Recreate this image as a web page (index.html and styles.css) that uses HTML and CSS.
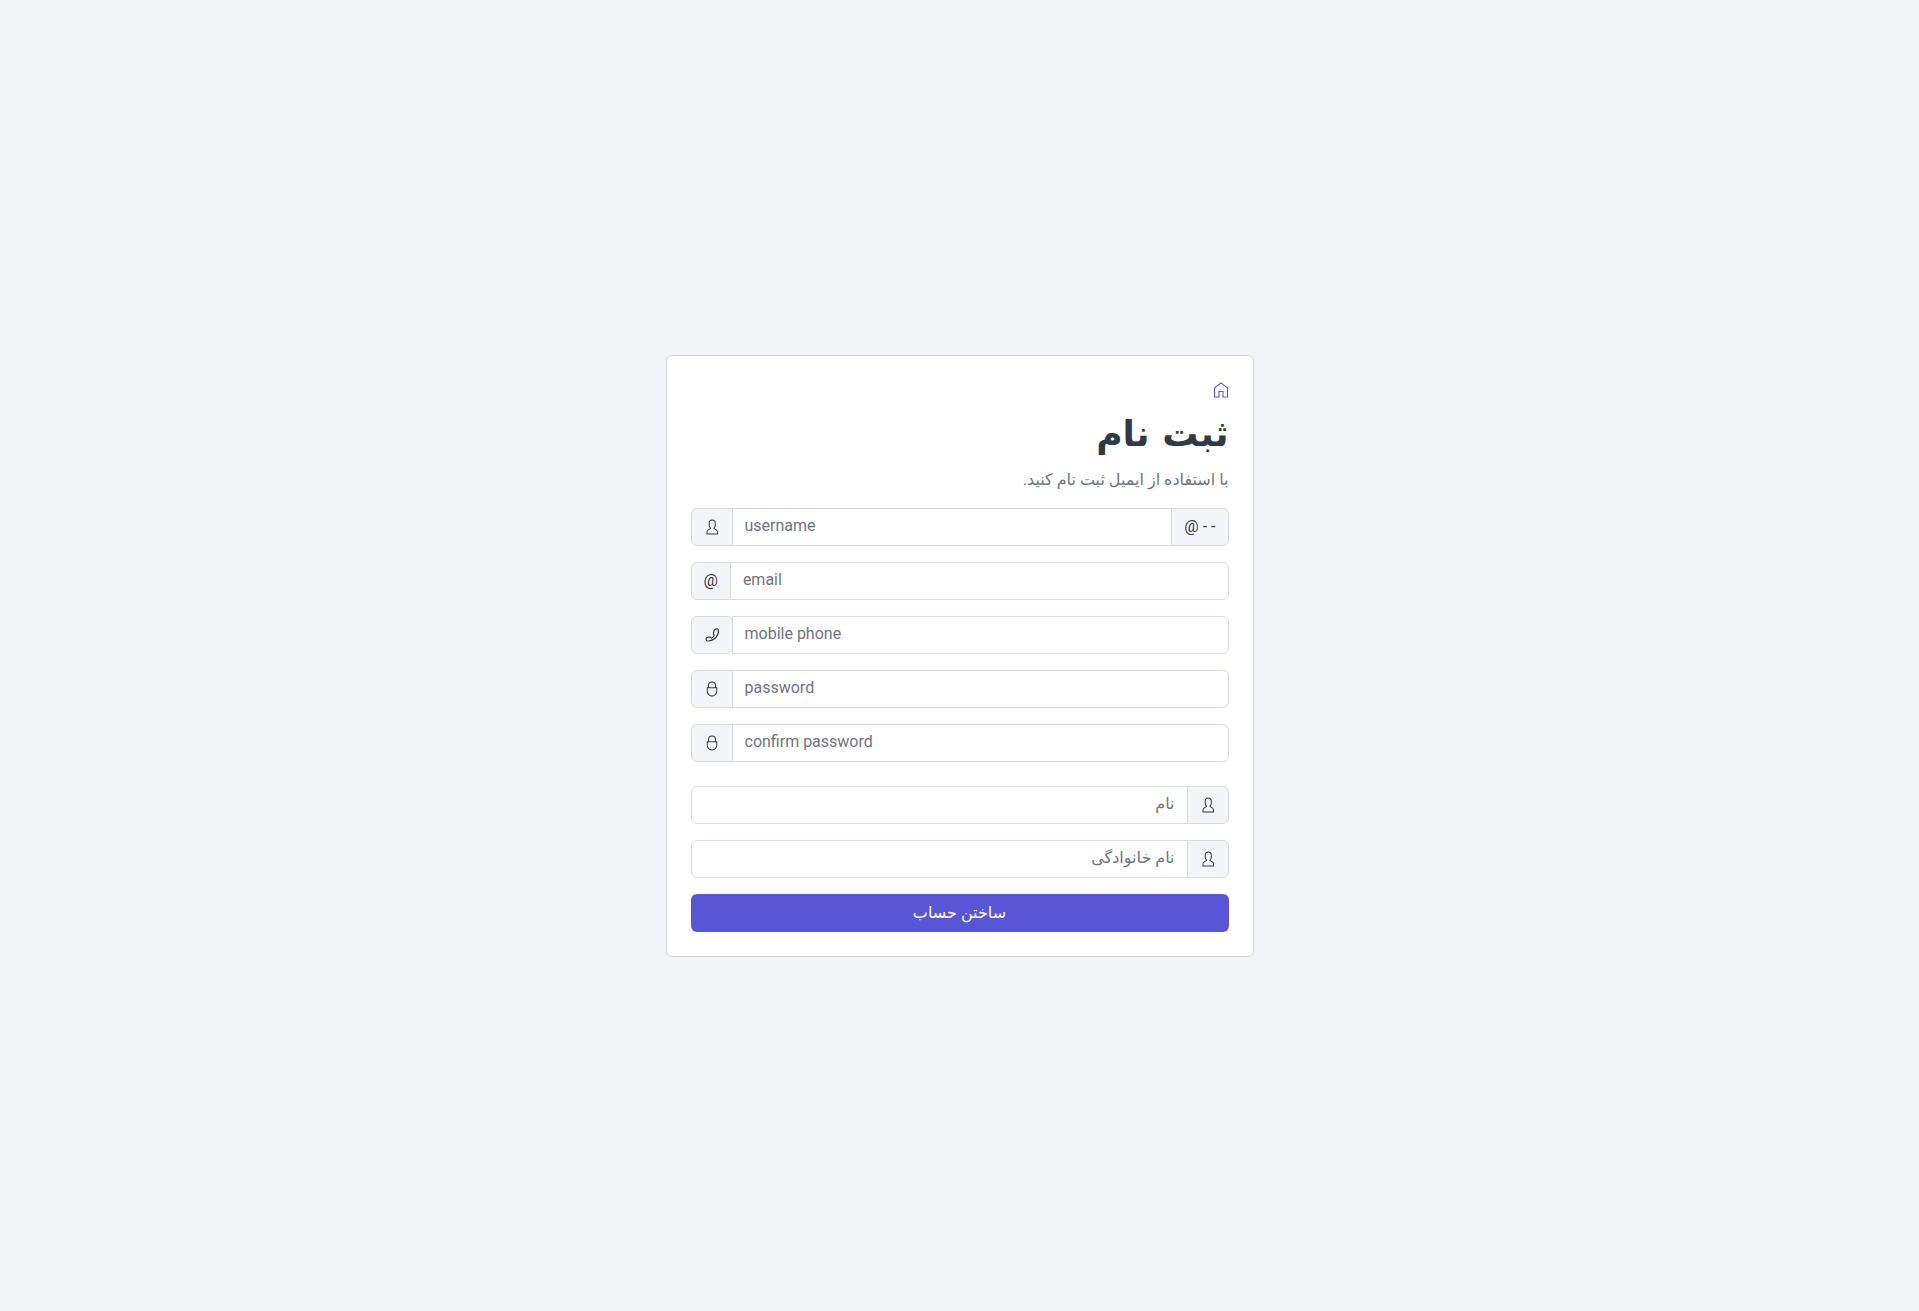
FILE: index.html
```html
<!DOCTYPE html>
<html lang="fa" dir="rtl">
<head>
<meta charset="utf-8">
<meta name="viewport" content="width=device-width, initial-scale=1">
<title>ثبت نام</title>
<link rel="stylesheet" href="styles.css">
</head>
<body>
<svg class="sprite" aria-hidden="true">
  <symbol id="user" viewBox="0 0 512 512"><path d="M411.6,343.656l-72.823-47.334,27.455-50.334A80.23,80.23,0,0,0,376,207.681V128a112,112,0,0,0-224,0v79.681a80.236,80.236,0,0,0,9.768,38.308l27.455,50.333L116.4,343.656A79.725,79.725,0,0,0,80,410.732V496H448V410.732A79.727,79.727,0,0,0,411.6,343.656ZM416,464H112V410.732a47.836,47.836,0,0,1,21.841-40.246l97.66-63.479-41.64-76.341A48.146,48.146,0,0,1,184,207.681V128a80,80,0,0,1,160,0v79.681a48.146,48.146,0,0,1-5.861,22.985L296.5,307.007l97.662,63.479h0A47.836,47.836,0,0,1,416,410.732Z"/></symbol>
  <symbol id="lock" viewBox="0 0 512 512"><path d="M384,200V144a128,128,0,0,0-256,0v56H88V328c0,92.635,75.364,168,168,168s168-75.365,168-168V200ZM160,144a96,96,0,0,1,192,0v56H160ZM392,328c0,74.99-61.01,136-136,136s-136-61.01-136-136V232H392Z"/></symbol>
  <symbol id="phone" viewBox="0 0 512 512"><path fill="none" stroke="currentColor" stroke-width="36" stroke-linejoin="round" d="M340 90L400 60Q440 46 456 85Q485 210 395 320Q285 440 125 446Q74 446 64 405L72 365Q78 338 106 332L180 318Q204 316 218 338L240 364Q306 324 334 258L306 232Q292 216 300 194L320 112Q326 96 340 90Z"/></symbol>
  <symbol id="home" viewBox="0 0 512 512"><path fill="none" stroke="currentColor" stroke-width="34" d="M48 480V194L256 28L464 194V480H320V304H192V480Z"/></symbol>
</svg>
<main class="page">
  <form class="card">
    <a class="home" href="#" aria-label="خانه"><svg class="icon"><use href="#home"/></svg></a>
    <h1 class="title">ثبت نام</h1>
    <p class="lead">با استفاده از ایمیل ثبت نام کنید.</p>
    <div class="group" dir="ltr">
      <label class="addon" for="username"><svg class="icon"><use href="#user"/></svg></label>
      <input class="field" id="username" type="text" placeholder="username" aria-label="username">
      <span class="addon">@ - -</span>
    </div>
    <div class="group" dir="ltr">
      <label class="addon" for="email">@</label>
      <input class="field" id="email" type="email" placeholder="email" aria-label="email">
    </div>
    <div class="group" dir="ltr">
      <label class="addon addon-rounded" for="mobile"><svg class="icon"><use href="#phone"/></svg></label>
      <input class="field" id="mobile" type="tel" placeholder="mobile phone" aria-label="mobile phone">
    </div>
    <div class="group" dir="ltr">
      <label class="addon" for="password"><svg class="icon"><use href="#lock"/></svg></label>
      <input class="field" id="password" type="password" placeholder="password" aria-label="password">
    </div>
    <div class="group group-last" dir="ltr">
      <label class="addon" for="confirm"><svg class="icon"><use href="#lock"/></svg></label>
      <input class="field" id="confirm" type="password" placeholder="confirm password" aria-label="confirm password">
    </div>
    <div class="group">
      <label class="addon" for="first"><svg class="icon"><use href="#user"/></svg></label>
      <input class="field" id="first" type="text" placeholder="نام" aria-label="نام">
    </div>
    <div class="group">
      <label class="addon" for="last"><svg class="icon"><use href="#user"/></svg></label>
      <input class="field" id="last" type="text" placeholder="نام خانوادگی" aria-label="نام خانوادگی">
    </div>
    <button class="submit" type="submit">ساختن حساب</button>
  </form>
</main>
</body>
</html>
```
FILE: styles.css
```css
*, *::before, *::after { box-sizing: border-box; }

body {
  margin: 0;
  background: #f3f4f8;
  color: #303c54;
  font-family: Roboto, "DejaVu Sans", sans-serif;
  font-size: 16px;
  line-height: 24px;
}

.sprite { display: none; }

.page {
  min-height: 100vh;
  padding: 16px;
  display: flex;
  align-items: center;
  justify-content: center;
}

.card {
  width: 100%;
  max-width: 588px;
  padding: 24px;
  background: #fff;
  border: 1px solid #d3d4d8;
  border-radius: 6px;
}

.icon {
  display: block;
  width: 16px;
  height: 16px;
  fill: currentColor;
}

.home {
  display: flex;
  height: 20px;
  align-items: center;
  color: #5856d6;
}

.title {
  margin: 8px 0;
  font-family: "DejaVu Sans", sans-serif;
  font-size: 36px;
  line-height: 52px;
  font-weight: 700;
  color: #303a46;
}

.lead {
  margin: 0 0 16px;
  color: #6f7580;
}

.group {
  display: flex;
  height: 38px;
  margin-bottom: 16px;
}

.group-last { margin-bottom: 24px; }

.addon {
  display: flex;
  align-items: center;
  padding: 0 12px;
  background: #f3f4f8;
  border: 1px solid #d8dbe4;
  color: #343a46;
}

.field {
  flex: 1;
  min-width: 0;
  padding: 0 12px 2px;
  background: #fff;
  border: 1px solid #d8dbe4;
  border-radius: 0;
  font: inherit;
  color: inherit;
}

.field::placeholder {
  color: #6f7580;
  opacity: 1;
}

.group > :not(:first-child) { margin-inline-start: -1px; }

.group > :first-child {
  border-start-start-radius: 6px;
  border-end-start-radius: 6px;
}

.group > :last-child {
  border-start-end-radius: 6px;
  border-end-end-radius: 6px;
}

.group > .addon-rounded { border-radius: 6px; }

.submit {
  display: block;
  width: 100%;
  height: 38px;
  border: 0;
  border-radius: 6px;
  background: #5856d6;
  color: #fff;
  font: inherit;
  font-weight: 500;
}
```
